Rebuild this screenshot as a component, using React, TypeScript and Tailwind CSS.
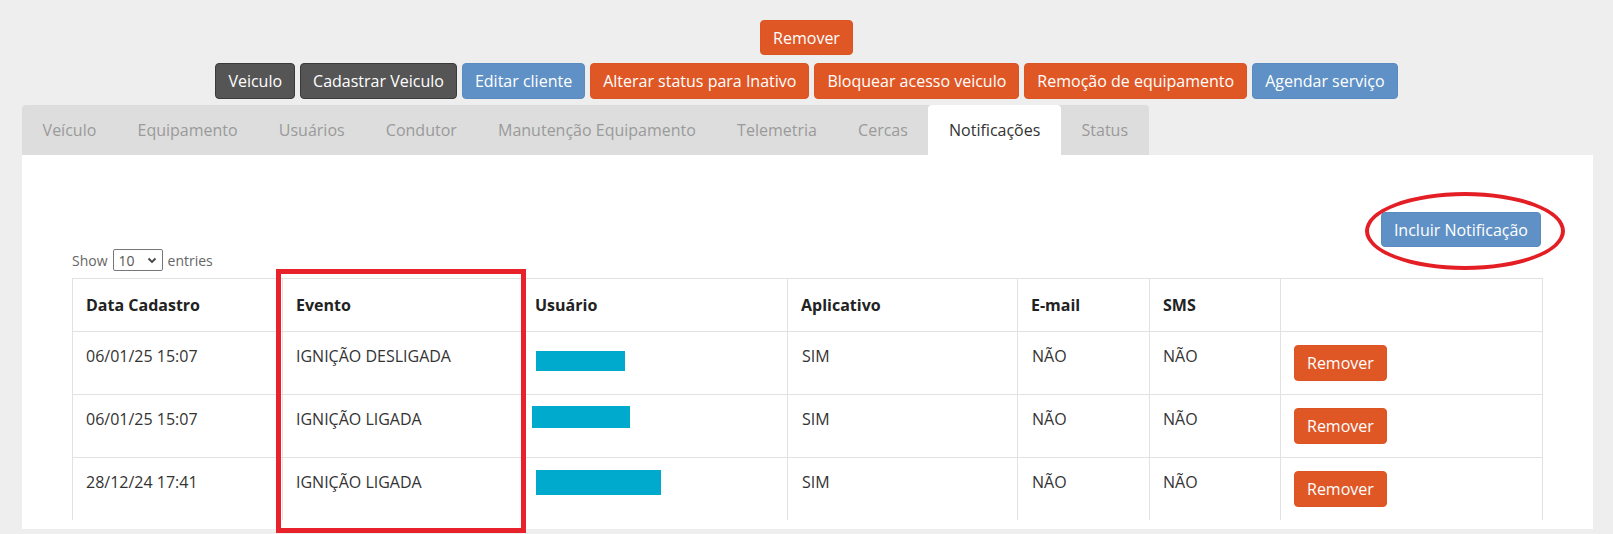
const TOP_BUTTONS = [
  { label: 'Veiculo', tone: 'dark' },
  { label: 'Cadastrar Veiculo', tone: 'dark' },
  { label: 'Editar cliente', tone: 'blue' },
  { label: 'Alterar status para Inativo', tone: 'orange' },
  { label: 'Bloquear acesso veiculo', tone: 'orange' },
  { label: 'Remoção de equipamento', tone: 'orange' },
  { label: 'Agendar serviço', tone: 'blue' },
] as const

const TONES: Record<string, string> = {
  dark: 'bg-[#555555] border-[#3a3a3a]',
  blue: 'bg-[#5f91c6] border-[#5a8bc0]',
  orange: 'bg-[#e05726] border-[#dc5424]',
}

const TABS = [
  'Veículo',
  'Equipamento',
  'Usuários',
  'Condutor',
  'Manutenção Equipamento',
  'Telemetria',
  'Cercas',
  'Notificações',
  'Status',
]

const ROWS = [
  { date: '06/01/25 15:07', event: 'IGNIÇÃO DESLIGADA', bar: 'ml-0 mt-[7px] w-[89px] h-[20px]' },
  { date: '06/01/25 15:07', event: 'IGNIÇÃO LIGADA', bar: '-ml-1 -mt-px w-[98px] h-[22px]' },
  { date: '28/12/24 17:41', event: 'IGNIÇÃO LIGADA', bar: 'ml-0 mt-0 w-[125px] h-[25px]' },
]

function Btn({ label, tone }: { label: string; tone: string }) {
  return (
    <button
      className={`h-9 px-3 border rounded-[4px] text-white text-[16px] leading-6 whitespace-nowrap ${TONES[tone]}`}
    >
      {label}
    </button>
  )
}

export default function App() {
  return (
    <div className="relative w-[1613px] h-[534px] overflow-hidden bg-[#eeeeee] font-['Open_Sans',sans-serif]">
      {/* Action buttons */}
      <div className="flex justify-center pt-5">
        <button className="h-[35px] px-3 border border-[#dc5424] rounded-[4px] bg-[#e05726] text-white text-[16px] leading-6">
          Remover
        </button>
      </div>
      <div className="flex justify-center gap-[5px] mt-2">
        {TOP_BUTTONS.map((b) => (
          <Btn key={b.label} label={b.label} tone={b.tone} />
        ))}
      </div>

      {/* Tabs */}
      <div className="ml-[22px] mt-[6px] flex w-fit bg-[#dddddd] rounded-t-[4px]">
        {TABS.map((t) => (
          <div
            key={t}
            className={`h-[50px] px-[20.6px] flex items-center text-[16px] rounded-t-[4px] ${
              t === 'Notificações' ? 'bg-white text-[#333333]' : 'text-[#9a9a9a]'
            }`}
          >
            {t}
          </div>
        ))}
      </div>

      {/* Panel */}
      <div className="ml-[22px] mr-[20px] h-[374px] bg-white px-[50px] overflow-hidden">
        <div className="flex justify-end pt-[57px] pr-[2px]">
          <button className="h-[35px] px-3 border border-[#5a8bc0] rounded-[4px] bg-[#5f91c6] text-white text-[16px] leading-6">
            Incluir Notificação
          </button>
        </div>

        <div className="flex items-center gap-[5px] mt-[2px] h-[22px] text-[14px] text-[#666666]">
          <span>Show</span>
          <div className="w-[50px] h-[22px] border border-[#777777] rounded-[2px] flex items-center justify-between pl-[5px] pr-[4px] text-[#555555]">
            <span>10</span>
            <svg width="12" height="12" viewBox="0 0 12 12" fill="none" stroke="#444" strokeWidth="1.8">
              <path d="M2.5 4.5 6 8l3.5-3.5" />
            </svg>
          </div>
          <span>entries</span>
        </div>

        <div className="mt-[7px] h-[242px] overflow-hidden">
          <table className="w-full table-fixed border-collapse text-[16px] leading-6">
            <colgroup>
              <col className="w-[210px]" />
              <col className="w-[239px]" />
              <col className="w-[266px]" />
              <col className="w-[230px]" />
              <col className="w-[132px]" />
              <col className="w-[131px]" />
              <col />
            </colgroup>
            <thead>
              <tr className="text-left text-[#222222]">
                {['Data Cadastro', 'Evento', 'Usuário', 'Aplicativo', 'E-mail', 'SMS', ''].map((h, i) => (
                  <th key={i} className="border border-[#e2e2e2] px-[13px] py-[14px] font-bold">
                    {h}
                  </th>
                ))}
              </tr>
            </thead>
            <tbody className="text-[#333333]">
              {ROWS.map((r, i) => (
                <tr key={i}>
                  <td className="border border-[#e2e2e2] px-[13px] pt-3 align-top">{r.date}</td>
                  <td className="border border-[#e2e2e2] px-[13px] pt-3 align-top">{r.event}</td>
                  <td className="border border-[#e2e2e2] px-[14px] pt-3 align-top">
                    <div className={`bg-[#00aacd] ${r.bar}`} />
                  </td>
                  <td className="border border-[#e2e2e2] px-[14px] pt-3 align-top">SIM</td>
                  <td className="border border-[#e2e2e2] px-[14px] pt-3 align-top">NÃO</td>
                  <td className="border border-[#e2e2e2] px-[13px] pt-3 align-top">NÃO</td>
                  <td className="border border-[#e2e2e2] px-[13px] pt-[13px] pb-[13px] align-top">
                    <button className="h-9 px-3 border border-[#dc5424] rounded-[4px] bg-[#e05726] text-white text-[16px] leading-6">
                      Remover
                    </button>
                  </td>
                </tr>
              ))}
            </tbody>
          </table>
        </div>
      </div>

      {/* Annotations drawn over the page */}
      <div className="absolute left-[276px] top-[269px] w-[250px] h-[264px] border-[5px] border-[#e8222a]" />
      <div className="absolute left-[1365px] top-[192px] w-[200px] h-[78px] border-[4px] border-[#e31e24] rounded-[50%]" />
    </div>
  )
}
